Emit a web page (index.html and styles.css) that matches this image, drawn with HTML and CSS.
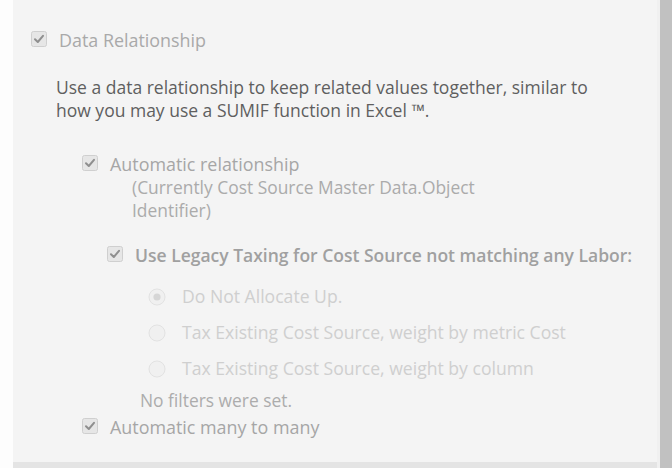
FILE: index.html
```html
<!DOCTYPE html>
<html>
<head>
<meta charset="utf-8">
<link rel="stylesheet" href="styles.css">
</head>
<body>
<div class="frame">
  <div class="gutter"></div>
  <div class="panel">
    <div class="content">
      <div class="row r-title">
        <span class="cb"><svg viewBox="0 0 16 16" width="16" height="16"><rect x="0.5" y="0.5" width="15" height="15" rx="2" fill="#e6e6e6" stroke="#cfcfcf"/><path d="M4 8.3 L6.8 11 L12 4.8" fill="none" stroke="#8f8f8f" stroke-width="2" stroke-linecap="round" stroke-linejoin="round"/></svg></span>
        <span class="lbl">Data Relationship</span>
      </div>
      <p class="desc">Use a data relationship to keep related values together, similar to how you may use a SUMIF function in Excel ™.</p>
      <div class="inner">
        <div class="row r-auto">
          <span class="cb"><svg viewBox="0 0 16 16" width="16" height="16"><rect x="0.5" y="0.5" width="15" height="15" rx="2" fill="#e6e6e6" stroke="#cfcfcf"/><path d="M4 8.3 L6.8 11 L12 4.8" fill="none" stroke="#8f8f8f" stroke-width="2" stroke-linecap="round" stroke-linejoin="round"/></svg></span>
          <span class="lbl">Automatic relationship</span>
        </div>
        <div class="sub">(Currently Cost Source Master Data.Object<br>Identifier)</div>
        <div class="row r-legacy">
          <span class="cb"><svg viewBox="0 0 16 16" width="16" height="16"><rect x="0.5" y="0.5" width="15" height="15" rx="2" fill="#e6e6e6" stroke="#cfcfcf"/><path d="M4 8.3 L6.8 11 L12 4.8" fill="none" stroke="#8f8f8f" stroke-width="2" stroke-linecap="round" stroke-linejoin="round"/></svg></span>
          <span class="lbl legacy">Use Legacy Taxing for Cost Source not matching any Labor:</span>
        </div>
        <div class="radios">
          <div class="radio-row">
            <span class="rd"><svg viewBox="0 0 18 18" width="18" height="18"><circle cx="9" cy="9" r="8" fill="#f0f0f0" stroke="#e2e2e2"/><circle cx="9" cy="9" r="3.6" fill="#d6d6d6"/></svg></span>
            <span class="rlbl">Do Not Allocate Up.</span>
          </div>
          <div class="radio-row">
            <span class="rd"><svg viewBox="0 0 18 18" width="18" height="18"><circle cx="9" cy="9" r="8" fill="#f0f0f0" stroke="#e2e2e2"/></svg></span>
            <span class="rlbl">Tax Existing Cost Source, weight by metric Cost</span>
          </div>
          <div class="radio-row">
            <span class="rd"><svg viewBox="0 0 18 18" width="18" height="18"><circle cx="9" cy="9" r="8" fill="#f0f0f0" stroke="#e2e2e2"/></svg></span>
            <span class="rlbl">Tax Existing Cost Source, weight by column</span>
          </div>
        </div>
        <div class="nofilters">No filters were set.</div>
        <div class="row r-many">
          <span class="cb"><svg viewBox="0 0 16 16" width="16" height="16"><rect x="0.5" y="0.5" width="15" height="15" rx="2" fill="#e6e6e6" stroke="#cfcfcf"/><path d="M4 8.3 L6.8 11 L12 4.8" fill="none" stroke="#8f8f8f" stroke-width="2" stroke-linecap="round" stroke-linejoin="round"/></svg></span>
          <span class="lbl">Automatic many to many</span>
        </div>
      </div>
    </div>
    <div class="bottom"></div>
  </div>
  <div class="sep"></div>
  <div class="scrollbar"></div>
</div>
</body>
</html>
```
FILE: styles.css
```css
html, body {
  margin: 0;
  padding: 0;
  background: #fdfdfd;
}
body {
  font-family: "Open Sans", "Noto Sans", "Liberation Sans", sans-serif;
  font-size: 17.4px;
  line-height: 23px;
}
.frame {
  display: flex;
  width: 672px;
  height: 468px;
  overflow: hidden;
}
.gutter {
  width: 13px;
  background: #fdfdfd;
}
.panel {
  width: 644px;
  display: flex;
  flex-direction: column;
  background: #f4f4f4;
}
.content {
  flex: 1;
  padding: 29px 0 0 18px;
}
.bottom {
  height: 6px;
  background: #e4e4e4;
}
.sep {
  width: 3px;
  background: #f0f0f0;
}
.scrollbar {
  width: 12px;
  background: #c1c1c1;
}
.row {
  display: flex;
  align-items: center;
  height: 23px;
}
.cb {
  width: 16px;
  height: 16px;
  display: flex;
  margin-right: 12px;
  position: relative;
  top: -2px;
}
.cb svg { display: block; }
.lbl {
  color: #a6a6a6;
  font-size: 17.9px;
}
.r-title .lbl { color: #a9a9a9; }
.desc {
  margin: 24px 0 0 25px;
  width: 550px;
  color: #5f5f5f;
  font-size: 17.5px;
}
.inner {
  margin-top: 31px;
  padding-left: 51px;
}
.sub {
  padding-left: 50px;
  color: #ababab;
}
.r-legacy {
  margin-top: 22px;
  padding-left: 25px;
}
.legacy {
  color: #a0a0a0;
  font-weight: 600;
  font-size: 17.5px;
}
.radios {
  margin-top: 18px;
  padding-left: 66px;
  display: flex;
  flex-direction: column;
  gap: 13px;
}
.radio-row {
  display: flex;
  align-items: center;
  height: 23px;
}
.rd {
  width: 18px;
  height: 18px;
  margin-right: 16px;
  display: flex;
}
.rlbl {
  color: #cfcfcf;
  font-size: 17.6px;
}
.nofilters {
  margin-top: 9px;
  padding-left: 58px;
  color: #acacac;
}
.r-many {
  margin-top: 4px;
}
```
